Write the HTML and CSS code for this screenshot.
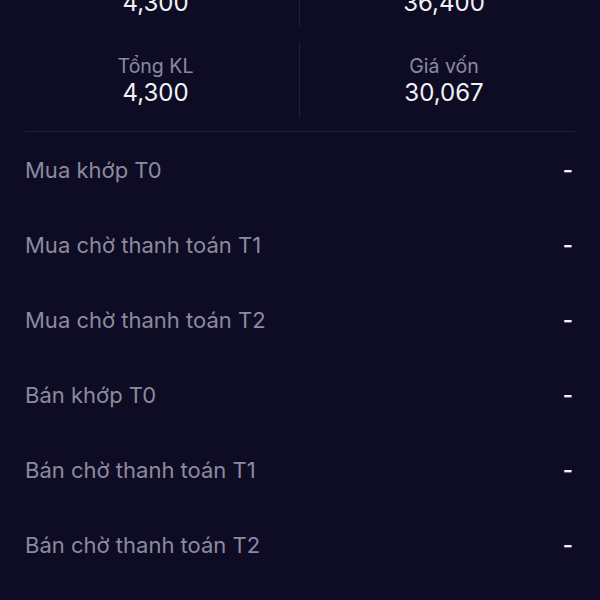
FILE: index.html
```html
<!DOCTYPE html>
<html>
    <head>
        <meta charset="UTF-8" />
        <title>Chi tiết cổ phiếu</title>
        <link rel="stylesheet" href="styles.css">
    </head>
    <body>
    <div class="stats">
        <div class="stat">
            <p class="stat-label">Khả dụng</p>
            <p class="stat-value">4,300</p>
        </div>
        <div class="stat">
            <p class="stat-label">Giá hiện tại</p>
            <p class="stat-value">36,400</p>
        </div>
        <div class="stat">
            <p class="stat-label">Tổng KL</p>
            <p class="stat-value">4,300</p>
        </div>
        <div class="stat">
            <p class="stat-label">Giá vốn</p>
            <p class="stat-value">30,067</p>
        </div>
    </div>
    <div class="rows">
        <div class="row"><span class="row-label">Mua khớp T0</span><span class="row-value">-</span></div>
        <div class="row"><span class="row-label">Mua chờ thanh toán T1</span><span class="row-value">-</span></div>
        <div class="row"><span class="row-label">Mua chờ thanh toán T2</span><span class="row-value">-</span></div>
        <div class="row"><span class="row-label">Bán khớp T0</span><span class="row-value">-</span></div>
        <div class="row"><span class="row-label">Bán chờ thanh toán T1</span><span class="row-value">-</span></div>
        <div class="row"><span class="row-label">Bán chờ thanh toán T2</span><span class="row-value">-</span></div>
    </div>
    </body>
</html>
```

FILE: styles.css
```css
html, body {
    margin: 0;
    padding: 0;
    background-color: #0e0c24;
    font-family: Inter, "Noto Sans", sans-serif;
    overflow: hidden;
}
.stats {
    display: grid;
    grid-template-columns: 1fr 1fr;
    row-gap: 14px;
    margin: -48px 25px 0 25px;
    padding-bottom: 13px;
    border-bottom: 1px solid #22213a;
}
.stat {
    height: 76px;
    box-sizing: border-box;
    padding-top: 12px;
    text-align: center;
}
.stat:nth-child(odd) {
    border-right: 1px solid #1f1e36;
    padding-right: 13px;
}
.stat:nth-child(even) {
    padding-left: 13px;
}
.stat-label {
    margin: 0;
    font-size: 19.5px;
    line-height: 24px;
    color: #8c8a9e;
}
.stat-value {
    margin: 0;
    font-size: 24px;
    line-height: 30px;
    color: #f2f2f6;
}
.rows {
    padding: 0 25px;
}
.row {
    height: 75px;
    display: flex;
    align-items: center;
    justify-content: space-between;
}
.row-label {
    font-size: 22px;
    color: #8c8a9e;
}
.row-value {
    font-size: 22px;
    font-weight: 600;
    color: #f2f2f6;
    padding-right: 2px;
}
```
